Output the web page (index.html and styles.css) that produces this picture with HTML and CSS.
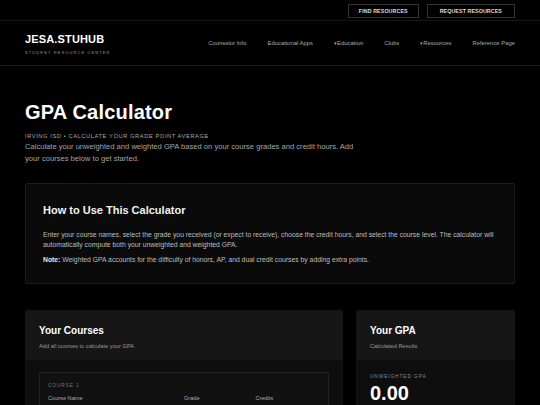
FILE: index.html
```html
<!DOCTYPE html>
<html lang="en">
<head>
<meta charset="utf-8">
<title>GPA Calculator - JESA.STUHUB</title>
<link rel="stylesheet" href="styles.css">
</head>
<body>
<div class="topbar">
  <a class="top-btn" href="#">FIND RESOURCES</a>
  <a class="top-btn" href="#">REQUEST RESOURCES</a>
</div>
<header class="header">
  <div class="brand">
    <div class="logo">JESA.STUHUB</div>
    <div class="tagline">STUDENT RESOURCE CENTER</div>
  </div>
  <nav class="nav">
    <a href="#">Counselor Info</a>
    <a href="#">Educational Apps</a>
    <a href="#"><span class="caret">▾</span>Education</a>
    <a href="#">Clubs</a>
    <a href="#"><span class="caret">▾</span>Resources</a>
    <a href="#">Reference Page</a>
  </nav>
</header>
<main class="main">
  <section class="hero">
    <h1 class="title">GPA Calculator</h1>
    <div class="eyebrow">IRVING ISD • CALCULATE YOUR GRADE POINT AVERAGE</div>
    <p class="lead">Calculate your unweighted and weighted GPA based on your course grades and credit hours. Add your courses below to get started.</p>
  </section>
  <section class="howto">
    <h2 class="howto-title">How to Use This Calculator</h2>
    <p class="howto-text">Enter your course names, select the grade you received (or expect to receive), choose the credit hours, and select the course level. The calculator will automatically compute both your unweighted and weighted GPA.</p>
    <p class="howto-text note"><strong>Note:</strong> Weighted GPA accounts for the difficulty of honors, AP, and dual credit courses by adding extra points.</p>
  </section>
  <section class="calc">
    <div class="card">
      <div class="card-head">
        <h3 class="card-title">Your Courses</h3>
        <div class="card-sub">Add all courses to calculate your GPA</div>
      </div>
      <div class="card-body">
        <div class="course">
          <div class="course-label">COURSE 1</div>
          <div class="course-grid">
            <div class="field-label">Course Name</div>
            <div class="field-label">Grade</div>
            <div class="field-label">Credits</div>
          </div>
        </div>
      </div>
    </div>
    <div class="card">
      <div class="card-head">
        <h3 class="card-title">Your GPA</h3>
        <div class="card-sub">Calculated Results</div>
      </div>
      <div class="card-body result">
        <div class="course-label">UNWEIGHTED GPA</div>
        <div class="gpa-value">0.00</div>
      </div>
    </div>
  </section>
</main>
</body>
</html>
```
FILE: styles.css
```css
* { box-sizing: border-box; }
html, body { margin: 0; padding: 0; background: #000; }
body {
  font-family: "Liberation Sans", Arial, sans-serif;
  color: #fff;
}
a { text-decoration: none; color: inherit; }

.topbar {
  display: flex;
  justify-content: flex-end;
  gap: 8px;
  height: 21px;
  padding: 4px 25px 0;
  border-bottom: 1px solid #161616;
}
.top-btn {
  display: flex;
  align-items: center;
  height: 13.5px;
  padding: 0 10px;
  border: 1px solid #333;
  font-size: 5.3px;
  font-weight: bold;
  letter-spacing: 0.1px;
  color: #ddd;
}
.top-btn:last-child { padding: 0 12px; }

.header {
  display: flex;
  justify-content: space-between;
  align-items: center;
  height: 45px;
  padding: 0 25px;
  border-bottom: 1px solid #1a1a1a;
}
.brand { padding-top: 1px; }
.logo {
  font-size: 11px;
  font-weight: bold;
  letter-spacing: 0.15px;
  line-height: 13px;
}
.tagline {
  margin-top: 4px;
  font-size: 4px;
  letter-spacing: 1.1px;
  color: #999;
}
.nav {
  display: flex;
  gap: 21px;
}
.nav a {
  font-size: 5.9px;
  color: #aaa;
}
.caret { font-size: 5px; }

.main { padding: 0 25px; }

.hero { padding-top: 35px; }
.title {
  margin: 0;
  font-size: 20px;
  font-weight: bold;
  letter-spacing: 0.2px;
  line-height: 22px;
}
.eyebrow {
  margin-top: 10px;
  font-size: 5.7px;
  letter-spacing: 0.6px;
  color: #aaa;
}
.lead {
  margin: 2px 0 0;
  max-width: 340px;
  font-size: 7.6px;
  line-height: 12px;
  color: #a6a6a6;
}

.howto {
  margin-top: 18px;
  height: 101px;
  padding: 20px 15px 0 17px;
  background: #0a0a0a;
  border: 1px solid #1c1c1c;
  border-radius: 2px;
}
.howto-title {
  margin: 0 0 13px;
  font-size: 11px;
  font-weight: bold;
  line-height: 13px;
  color: #f2f2f2;
}
.howto-text {
  margin: 0;
  font-size: 6.8px;
  line-height: 9.7px;
  color: #bdbdbd;
}
.howto-text.note { margin-top: 6px; }
.howto-text strong { color: #e6e6e6; }

.calc {
  display: grid;
  grid-template-columns: 318px 1fr;
  gap: 13px;
  margin-top: 26px;
}
.card {
  background: #0e0e0e;
  border: 1px solid #141414;
  border-radius: 2px;
  overflow: hidden;
  height: 120px;
}
.card-head {
  height: 49px;
  padding: 14px 13px 0;
  background: #161616;
}
.card-title {
  margin: 0;
  font-size: 10px;
  font-weight: bold;
  line-height: 12px;
}
.card-sub {
  margin-top: 6px;
  font-size: 5.7px;
  color: #999;
}
.card-body { padding: 12px 13px 0; }
.course {
  height: 60px;
  padding: 10px 8px 0;
  background: #111;
  border: 1px solid #232323;
  border-radius: 2px;
}
.course-label {
  font-size: 4.8px;
  letter-spacing: 0.9px;
  color: #777;
}
.course-grid {
  display: grid;
  grid-template-columns: 2fr 1fr 1fr;
  gap: 7px;
  margin-top: 7px;
}
.field-label {
  font-size: 5.6px;
  color: #aaa;
}
.result { padding-top: 14px; }
.result .course-label { color: #8a8a8a; }
.gpa-value {
  margin-top: 3px;
  font-size: 20px;
  font-weight: bold;
  line-height: 22px;
}
```
